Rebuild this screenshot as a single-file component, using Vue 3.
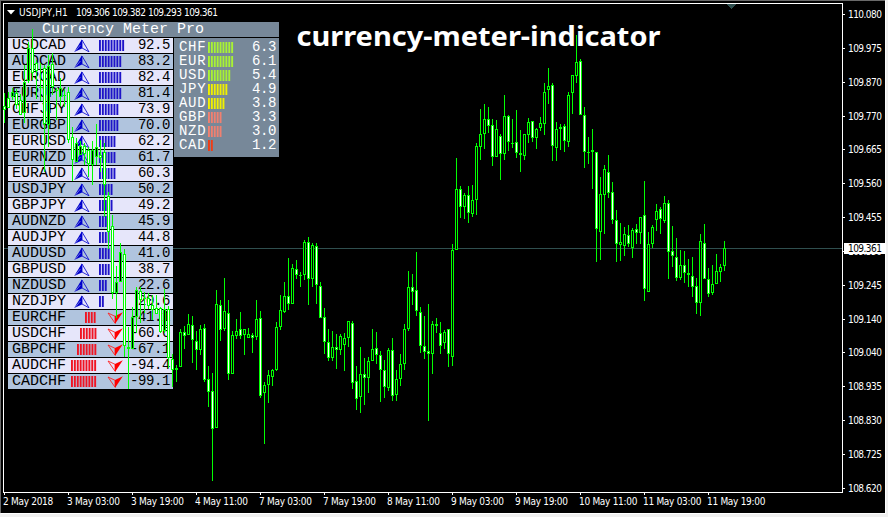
<script setup>
import {computed, ref} from "vue";

const symbol = ref('USDJPY,H1');
const quotes = ref(['109.306', '109.382', '109.293', '109.361']);
const lastPrice = computed(()=>quotes.value[3]);

const prices = ['110.080', '109.975', '109.870', '109.770', '109.665', '109.560', '109.455', '109.350', '109.245', '109.140', '109.040', '108.935', '108.830', '108.725', '108.620'];
const times = ['2 May 2018', '3 May 03:00', '3 May 19:00', '4 May 11:00', '7 May 03:00', '7 May 19:00', '8 May 11:00', '9 May 03:00', '9 May 19:00', '10 May 11:00', '11 May 03:00', '11 May 19:00'];

const pairs = ref([
  {name: 'USDCAD', value: 92.5, bars: 9},
  {name: 'AUDCAD', value: 83.2, bars: 8},
  {name: 'EURCAD', value: 82.4, bars: 8},
  {name: 'EURJPY', value: 81.4, bars: 8},
  {name: 'CHFJPY', value: 73.9, bars: 7},
  {name: 'EURGBP', value: 70.0, bars: 7},
  {name: 'EURUSD', value: 62.2, bars: 6},
  {name: 'EURNZD', value: 61.7, bars: 6},
  {name: 'EURAUD', value: 60.3, bars: 6},
  {name: 'USDJPY', value: 50.2, bars: 5},
  {name: 'GBPJPY', value: 49.2, bars: 5},
  {name: 'AUDNZD', value: 45.9, bars: 4},
  {name: 'AUDJPY', value: 44.8, bars: 4},
  {name: 'AUDUSD', value: 41.0, bars: 4},
  {name: 'GBPUSD', value: 38.7, bars: 4},
  {name: 'NZDUSD', value: 22.6, bars: 3},
  {name: 'NZDJPY', value: 20.6, bars: 2},
  {name: 'EURCHF', value: -41.1, bars: 4},
  {name: 'USDCHF', value: -60.6, bars: 6},
  {name: 'GBPCHF', value: -67.1, bars: 7},
  {name: 'AUDCHF', value: -94.4, bars: 9},
  {name: 'CADCHF', value: -99.1, bars: 9}
]);

const currencies = ref([
  {name: 'CHF', value: 6.3, bars: 9, level: 'strong'},
  {name: 'EUR', value: 6.1, bars: 9, level: 'strong'},
  {name: 'USD', value: 5.4, bars: 8, level: 'strong'},
  {name: 'JPY', value: 4.9, bars: 7, level: 'medium'},
  {name: 'AUD', value: 3.8, bars: 6, level: 'medium'},
  {name: 'GBP', value: 3.3, bars: 5, level: 'weak'},
  {name: 'NZD', value: 3.0, bars: 5, level: 'weak'},
  {name: 'CAD', value: 1.2, bars: 2, level: 'lowest'}
]);

// high, body top, body bottom, low, 1 = up / 0 = down, one candle every 4px
const candles = [
  [93,106,110,123,0],[92,98,108,108,0],[88,92,97,100,1],[89,93,105,109,0],[94,100,115,115,0],
  [65,82,113,123,1],[42,48,81,83,1],[29,48,73,80,0],[60,63,71,99,0],[63,87,88,101,0],
  [65,68,124,172,0],[55,66,125,147,1],[53,64,87,95,0],[88,90,90,120,0],[78,88,97,106,1],
  [89,95,95,107,0],[87,92,140,143,0],[127,137,160,181,0],[138,143,162,162,1],[141,146,155,155,1],
  [143,146,154,165,0],[147,150,164,177,0],[141,150,165,185,1],[124,147,157,165,1],[140,155,158,172,0],
  [143,152,185,217,0],[192,196,232,249,0],[215,226,293,299,0],[266,282,293,318,1],[243,252,282,282,1],
  [249,254,346,357,0],[327,347,349,389,1],[307,317,349,349,1],[287,290,317,333,1],[287,291,300,323,0],
  [292,298,298,313,0],[293,298,306,309,0],[295,305,310,320,0],[295,308,314,314,0],[307,308,332,333,0],
  [289,309,331,333,1],[306,309,358,368,0],[354,359,370,387,0],[365,368,370,382,1],[329,332,367,367,1],
  [326,332,336,349,0],[314,324,335,335,1],[316,325,340,363,0],[331,341,350,370,0],[325,329,350,355,1],
  [324,328,380,382,0],[366,379,392,407,0],[373,391,429,481,0],[290,304,428,428,1],[300,305,330,341,0],
  [278,311,329,331,1],[300,313,374,380,0],[331,335,374,374,1],[319,331,336,339,1],[312,329,336,339,0],
  [329,329,335,355,1],[328,334,338,338,1],[333,335,338,353,0],[300,319,337,340,1],[311,318,396,398,0],
  [382,385,393,444,1],[370,375,385,403,1],[369,370,377,386,1],[322,327,370,371,1],[295,310,327,330,1],
  [282,296,312,313,1],[258,296,304,310,0],[264,268,304,304,1],[260,269,275,279,0],[272,275,275,287,0],
  [240,242,275,280,1],[237,242,279,305,0],[243,245,279,287,1],[243,246,285,304,0],[282,286,318,318,0],
  [308,317,342,354,0],[329,342,358,361,0],[331,347,358,361,1],[334,347,350,369,0],[334,336,350,355,1],
  [333,338,345,371,1],[321,321,338,347,1],[321,323,383,389,0],[366,381,399,410,0],[347,374,397,413,1],
  [358,374,378,405,0],[357,361,378,393,1],[329,349,361,361,1],[332,348,355,364,0],[351,355,370,402,0],
  [360,370,387,398,0],[348,350,388,391,1],[338,350,396,401,0],[370,379,395,401,1],[354,364,379,386,1],
  [324,329,364,370,1],[271,287,329,331,1],[274,287,292,305,0],[252,290,311,316,0],[307,312,346,353,0],
  [316,346,352,359,0],[304,351,354,421,0],[321,324,354,374,1],[318,324,326,333,0],[322,333,346,354,0],
  [330,332,343,349,1],[329,329,354,367,0],[244,250,357,366,1],[158,189,250,250,1],[186,189,207,218,0],
  [193,195,207,219,1],[186,195,213,223,0],[185,200,214,217,1],[143,146,200,215,1],[109,134,147,160,1],
  [104,119,134,149,1],[107,119,126,133,0],[119,125,157,166,0],[120,129,157,157,1],[134,136,154,180,0],
  [95,116,154,160,1],[115,116,142,151,0],[119,143,143,148,0],[110,142,153,158,0],[130,153,155,172,0],
  [134,134,156,160,1],[118,122,135,143,1],[121,121,138,142,0],[128,129,138,149,1],[117,123,128,131,1],
  [83,92,124,135,1],[68,86,90,104,1],[83,85,146,161,0],[122,129,148,161,1],[124,127,129,150,1],
  [124,126,141,152,0],[92,95,142,147,1],[75,75,93,114,1],[35,62,76,83,1],[59,61,115,115,0],
  [107,115,152,168,0],[137,152,152,164,0],[129,150,152,189,1],[152,152,229,262,0],[177,194,232,260,1],
  [165,169,195,234,1],[155,172,193,198,0],[182,192,220,224,0],[210,220,244,262,0],[223,242,245,261,1],
  [227,234,246,256,1],[225,235,244,247,0],[228,230,248,258,1],[224,229,233,244,0],[217,217,233,244,1],
  [181,215,289,301,0],[232,244,292,292,1],[225,227,244,248,1],[204,211,220,231,1],[207,209,219,234,0],
  [196,203,221,223,1],[200,203,252,279,0],[226,251,256,267,0],[238,257,278,281,0],[250,265,278,280,1],
  [251,265,273,283,0],[259,273,275,287,0],[257,276,287,297,0],[278,286,303,314,0],[234,241,303,316,1],
  [224,243,279,279,0],[268,279,294,297,0],[265,284,293,295,1],[254,271,284,284,1],[264,267,272,282,1],
  [241,248,266,271,1]
];

const shapes = computed(()=>{
  return candles.map((c, i)=>({
    x: 4 + i * 4,
    high: c[0],
    top: c[1],
    bottom: c[2],
    low: c[3],
    up: c[4] === 1
  }));
})
</script>

<template>
  <div class="window">
    <div class="chart">
      <div class="main">
        <div class="plot">
          <svg class="layer" width="840" height="490" viewBox="3 3 840 490" shape-rendering="crispEdges">
            <rect x="4" y="248" width="838" height="1" fill="#2f4f4f"/>
            <path d="M727 4h9l-4.5 5z" fill="#2f4f4f"/>
          </svg>
          <svg class="layer" width="840" height="490" viewBox="3 3 840 490">
            <text class="title" x="296.5" y="46" textLength="364" lengthAdjust="spacingAndGlyphs">currency-meter-indicator</text>
          </svg>
          <div class="symbol">
            <svg width="8" height="5" viewBox="0 0 8 5"><path d="M0 0h8l-4 4.5z" fill="#fff"/></svg>
            <span class="symbolName">{{symbol}}</span>
            <span v-for="q in quotes" class="quote">{{q}}</span>
          </div>

          <div class="meter">
            <div class="meterHead">Currency Meter Pro</div>
            <div class="meterBody">
              <div class="pairs">
                <div v-for="p in pairs" class="pair" :class="{down: p.value < 0}">
                  <span class="pairName">{{p.name}}</span>
                  <span class="signal">
                    <svg v-if="p.value > 0" class="arrow" width="16" height="14" viewBox="0 0 16 14">
                      <path d="M8 1L15 12.8L8 9Z" fill="none" stroke="#1414d2" stroke-width=".9"/>
                      <path d="M8 .3L.2 13L8 9.4Z" fill="#0000cd"/>
                      <path d="M.8 12.8L6.4 6" stroke="#b4b4ea" stroke-width=".6"/>
                    </svg>
                    <svg class="bars" :width="p.bars * 2.9" height="11">
                      <rect v-for="n in p.bars" :x="(n - 1) * 2.9" y="0" width="1.9" height="11"/>
                    </svg>
                    <svg v-if="p.value < 0" class="arrow" width="16" height="14" viewBox="0 0 16 14">
                      <path d="M8 12.2L1 2L8 5.3Z" fill="none" stroke="#f22" stroke-width=".9"/>
                      <path d="M8 13L15.8 1.2L8 5Z" fill="#f00"/>
                    </svg>
                  </span>
                  <span class="value">{{p.value.toFixed(1)}}</span>
                </div>
              </div>
              <div class="currencies">
                <div v-for="c in currencies" class="currency" :class="c.level">
                  <span class="currencyName">{{c.name}}</span>
                  <svg class="bars" :width="c.bars * 2.9" height="11">
                    <rect v-for="n in c.bars" :x="(n - 1) * 2.9" y="0" width="1.9" height="11"/>
                  </svg>
                  <span class="value">{{c.value.toFixed(1)}}</span>
                </div>
              </div>
            </div>
          </div>

          <svg class="layer" width="840" height="490" viewBox="3 3 840 490" shape-rendering="crispEdges">
            <g v-for="s in shapes">
              <rect :x="s.x" :y="s.high" width="1" :height="s.low - s.high" fill="#0f0"/>
              <rect :x="s.x - 1" :y="s.top" width="3" :height="s.bottom - s.top || 1" fill="#0f0"/>
              <rect v-if="s.bottom - s.top > 2" :x="s.x" :y="s.top + 1" width="1" :height="s.bottom - s.top - 2" :fill="s.up ? '#000' : '#fff'"/>
            </g>
          </svg>
        </div>
        <div class="priceAxis">
          <div v-for="p in prices" class="price"><span>{{p}}</span></div>
          <div class="lastPrice">{{lastPrice}}</div>
        </div>
      </div>
      <div class="timeAxis">
        <div v-for="t in times" class="time">{{t}}</div>
      </div>
    </div>
  </div>
</template>

<style>
body{
  margin: 0;
  overflow: hidden;
}
</style>

<style scoped>
.window{
  box-sizing: border-box;
  width: 888px;
  height: 517px;
  padding: 0 3px 4px 0;
  background: #f0f0f0;
}
.chart{
  box-sizing: border-box;
  width: 885px;
  height: 513px;
  padding: 2px 0 0 2px;
  border-top: 1px solid #696969;
  border-left: 1px solid #696969;
  background: #000;
  color: #fff;
  font-family: "DejaVu Sans Condensed", "DejaVu Sans", sans-serif;
  font-stretch: condensed;
  font-size: 10px;
  box-shadow: 1px 1px #fff;
}
.main{
  display: flex;
  height: 490px;
}
.plot{
  position: relative;
  box-sizing: border-box;
  width: 840px;
  height: 490px;
  border: 1px solid #fff;
}
.layer{
  position: absolute;
  left: -1px;
  top: -1px;
}
.title{
  fill: #fff;
  font-family: "Noto Sans", "Open Sans", sans-serif;
  font-stretch: normal;
  font-weight: bold;
  font-size: 27px;
}
.symbol{
  display: flex;
  align-items: center;
  height: 16px;
  padding-left: 3px;
  white-space: nowrap;
}
.symbolName{
  flex: none;
  width: 51px;
  margin-left: 4px;
  margin-right: 6px;
  letter-spacing: .1px;
}
.quote{
  flex: none;
  width: 34px;
  margin-right: 2px;
  letter-spacing: -.55px;
}
.meter{
  position: absolute;
  left: 4px;
  top: 18px;
  width: 271px;
  font-family: "Liberation Mono", monospace;
  font-stretch: normal;
  font-size: 15px;
}
.meterHead{
  height: 15px;
  line-height: 15px;
  padding-left: 34px;
  background: #778899;
  margin-bottom: 1px;
}
.meterBody{
  display: flex;
  align-items: flex-start;
}
.pairs{
  width: 165px;
  margin-right: 1px;
  background: #000;
}
.pair{
  display: flex;
  align-items: center;
  height: 15px;
  margin-bottom: 1px;
  line-height: 15px;
  background: #e6e6fa;
  color: #000;
}
.pair:nth-child(even){
  background: #b0c4de;
}
.pair:last-child{
  margin-bottom: 0;
}
.pairName{
  width: 62px;
  padding-left: 4px;
}
.signal{
  display: flex;
  align-items: center;
  width: 50px;
  gap: 9px;
}
.pair .bars{
  fill: #1e14c8;
}
.pair.down .signal{
  justify-content: flex-end;
  gap: 10px;
  width: 49px;
}
.pair.down .bars{
  fill: #f01423;
}
.bars, .arrow{
  flex: none;
}
.value{
  flex: 1;
  padding-right: 3px;
  font-size: 14px;
  letter-spacing: -.4px;
  text-align: right;
}
.currencies{
  box-sizing: border-box;
  width: 105px;
  height: 119px;
  padding-top: 2px;
  background: #778899;
}
.currency{
  display: flex;
  align-items: center;
  height: 14px;
  line-height: 14px;
}
.currencyName{
  width: 29px;
  padding-left: 5px;
  font-size: 14px;
  letter-spacing: .7px;
}
.strong .bars{
  fill: #a8f234;
}
.medium .bars{
  fill: #f0f000;
}
.weak .bars{
  fill: #f08070;
}
.lowest .bars{
  fill: #f03c14;
}
.priceAxis{
  position: relative;
  display: flex;
  flex-direction: column;
  justify-content: space-between;
  box-sizing: border-box;
  width: 42px;
  height: 497px;
  padding: 4px 0;
  line-height: 15px;
  letter-spacing: -.55px;
}
.price{
  display: flex;
  align-items: center;
  height: 15px;
  gap: 3px;
}
.price::before{
  content: '';
  width: 2px;
  height: 1px;
  flex: none;
  background: #fff;
}
.lastPrice{
  position: absolute;
  left: 1px;
  top: 240px;
  width: 41px;
  height: 11px;
  padding-left: 4px;
  box-sizing: border-box;
  line-height: 11px;
  background: #fff;
  color: #000;
}
.timeAxis{
  display: flex;
  line-height: 14px;
}
.time{
  width: 64px;
  white-space: nowrap;
  letter-spacing: -.3px;
}
.time::before{
  content: '';
  display: block;
  width: 1px;
  height: 2px;
  margin-left: 1px;
  background: #fff;
}
</style>
